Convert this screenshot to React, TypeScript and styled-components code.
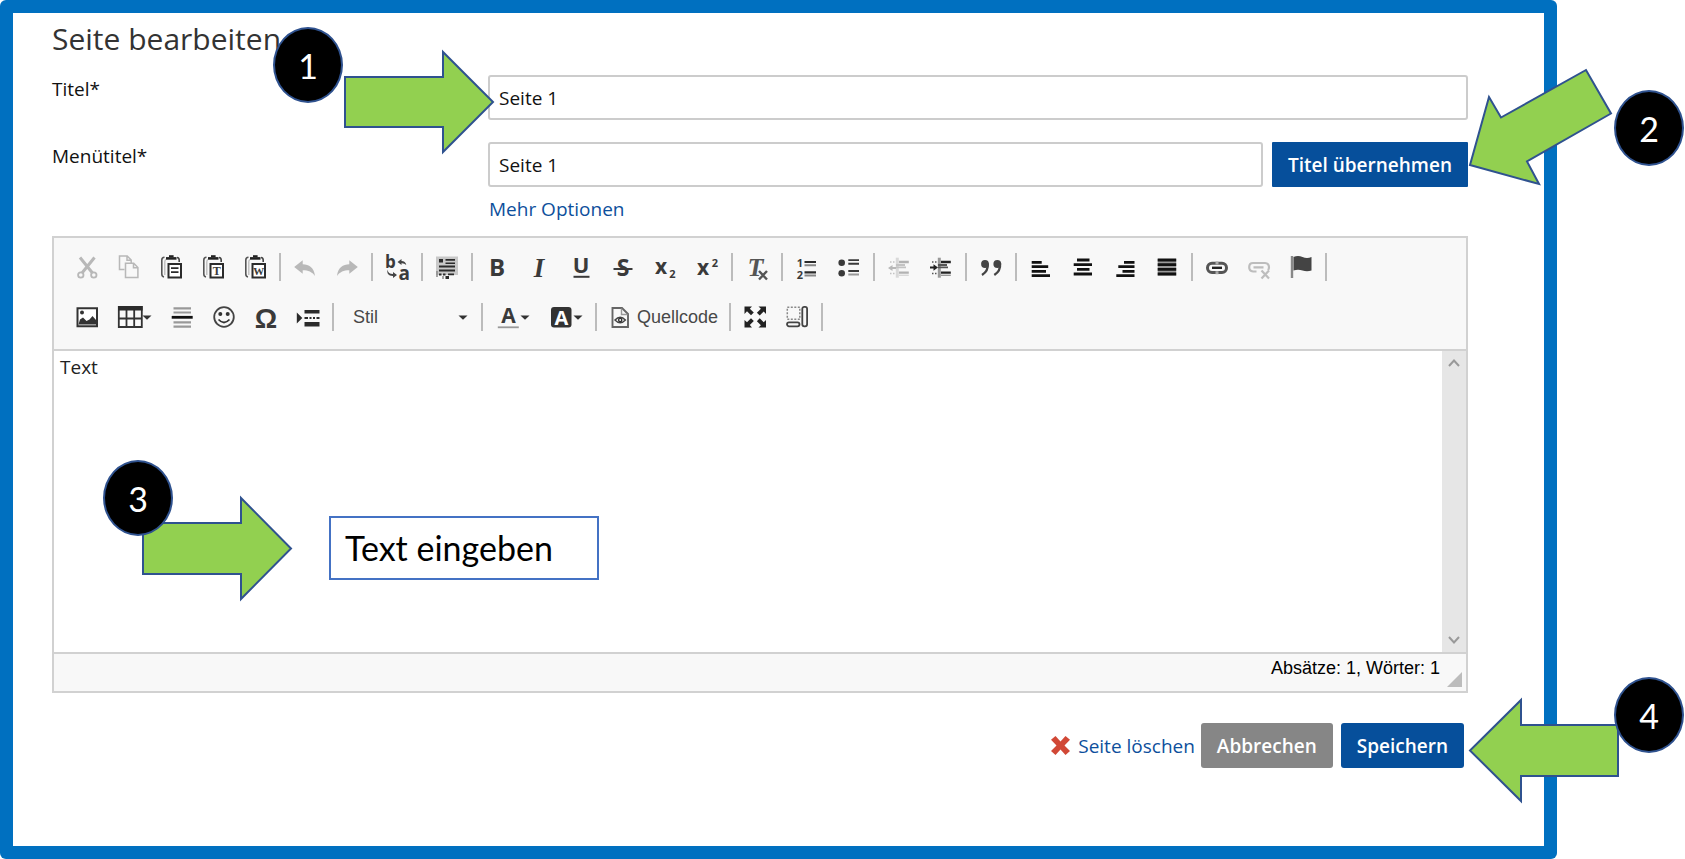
import React from 'react';
import styled, { createGlobalStyle } from 'styled-components';

const GlobalStyle = createGlobalStyle`
  *, *::before, *::after { box-sizing: border-box; }
  body {
    margin: 0;
    background: #fff;
    color: #111;
    font-family: "Open Sans", "Noto Sans", sans-serif;
    font-size: 19px;
  }
`;

const Stage = styled.div`
  position: relative;
  min-height: 100vh;
  display: flex;
  padding-right: 128px;
`;

const Frame = styled.main`
  flex: 1;
  min-width: 0;
  background: #0070c0;
  border-radius: 6px;
  padding: 13px;
  display: flex;
`;

const Page = styled.form`
  flex: 1;
  min-width: 0;
  background: #fff;
  padding: 4px 76px 0 39px;
`;

const Heading = styled.h1`
  margin: 0 0 14px;
  font-size: 30px;
  line-height: 44px;
  font-weight: 400;
  color: #333;
`;

const Fields = styled.div`
  display: flex;
  flex-direction: column;
  gap: 22px;
  margin-bottom: 15px;
`;

const FieldRow = styled.div`
  display: grid;
  grid-template-columns: 436px 1fr;
`;

const Label = styled.label`
  line-height: 28px;
`;

const FieldStack = styled.div`
  display: flex;
  flex-direction: column;
`;

const FieldLine = styled.div`
  display: flex;
  gap: 9px;
`;

const TextInput = styled.input`
  flex: 1;
  min-width: 0;
  height: 45px;
  border: 2px solid #ccc;
  border-radius: 3px;
  padding: 0 9px;
  background: #fff;
  color: #111;
  font: inherit;
`;

const ActionButton = styled.button<{ $tone?: 'grey'; $radius?: number }>`
  height: 45px;
  border: 0;
  border-radius: ${p => p.$radius ?? 3}px;
  padding: 0 16px;
  background: ${p => (p.$tone === 'grey' ? '#868686' : '#064f9b')};
  color: #fff;
  font: inherit;
  font-weight: 600;
`;

const TextLink = styled.a`
  display: inline-flex;
  align-items: center;
  gap: 8px;
  color: #0d4f9c;
  text-decoration: none;
  line-height: 24px;
`;

const MoreLink = styled(TextLink)`
  margin: 10px 0 0 1px;
`;

const Editor = styled.section`
  border: 2px solid #d1d1d1;
`;

const Toolbar = styled.div`
  background: #f8f8f8;
  border-bottom: 2px solid #d1d1d1;
  padding: 4px 12px 7px;
`;

const ToolRow = styled.div`
  display: flex;
  align-items: center;
  height: 50px;
`;

const ToolButton = styled.button<{ $width?: number; $faded?: boolean }>`
  width: ${p => p.$width ?? 42}px;
  height: 40px;
  flex: none;
  display: flex;
  align-items: center;
  justify-content: center;
  border: 0;
  padding: 0;
  background: none;
  color: #333;
  font: 18px "Liberation Sans", Arial, sans-serif;
  opacity: ${p => (p.$faded ? 0.32 : 1)};
`;

const SourceLabel = styled.span`
  margin-left: 5px;
  color: #484848;
`;

const Divider = styled.span`
  flex: none;
  width: 2px;
  height: 28px;
  margin: 0 3px;
  background: #bcbcbc;
`;

const StyleBox = styled.label`
  width: 141px;
  flex: none;
  display: flex;
  align-items: center;
  padding: 0 10px 0 16px;
`;

const StyleSelect = styled.select`
  flex: 1;
  min-width: 0;
  appearance: none;
  border: 0;
  padding: 0;
  background: none;
  color: #484848;
  font: 18px "Liberation Sans", Arial, sans-serif;
`;

const Icon = styled.svg`
  width: 24px;
  height: 24px;
  flex: none;
  overflow: visible;
`;

const CaretIcon = styled.svg`
  width: 10px;
  height: 5px;
  flex: none;
`;

const EditArea = styled.div`
  display: flex;
  height: 301px;
`;

const EditText = styled.textarea`
  flex: 1;
  min-width: 0;
  border: 0;
  resize: none;
  overflow: hidden;
  padding: 3px 6px;
  background: #fff;
  color: #222;
  font: inherit;
  line-height: 26px;
`;

const ScrollTrack = styled.div`
  width: 24px;
  background: #e6e6e6;
  display: flex;
  flex-direction: column;
  justify-content: space-between;
`;

const ScrollButton = styled.button`
  height: 24px;
  border: 0;
  padding: 0;
  background: none;
  display: grid;
  place-items: center;
`;

const StatusBar = styled.div`
  height: 39px;
  display: flex;
  justify-content: flex-end;
  gap: 7px;
  padding: 3px 4px 4px 0;
  background: #f8f8f8;
  border-top: 2px solid #d1d1d1;
  font: 18px/22px "Liberation Sans", Arial, sans-serif;
  color: #000;
`;

const Grip = styled.svg`
  width: 15px;
  height: 15px;
  align-self: flex-end;
`;

const Footer = styled.footer`
  display: flex;
  align-items: center;
  justify-content: flex-end;
  gap: 8px;
  padding: 30px 4px 0 0;
`;

const DeleteLink = styled(TextLink)`
  margin-right: -2px;
`;

/* Callouts float over the form. */
const Callout = styled.svg<{ $top: number; $left?: number; $right?: number }>`
  position: absolute;
  top: ${p => p.$top}px;
  left: ${p => (p.$left === undefined ? 'auto' : `${p.$left}px`)};
  right: ${p => (p.$right === undefined ? 'auto' : `${p.$right}px`)};
  overflow: visible;
  pointer-events: none;
  fill: #92d050;
  stroke: #2f528f;
  stroke-width: 2px;
`;

const Badge = styled.div<{ $top: number; $left?: number; $right?: number }>`
  position: absolute;
  top: ${p => p.$top}px;
  left: ${p => (p.$left === undefined ? 'auto' : `${p.$left}px`)};
  right: ${p => (p.$right === undefined ? 'auto' : `${p.$right}px`)};
  width: 70px;
  height: 76px;
  border: 2px solid #2f528f;
  border-radius: 50%;
  background: #000;
  color: #fff;
  display: grid;
  place-items: center;
  font: 34px Lato, Carlito, sans-serif;
`;

const Note = styled.div`
  position: absolute;
  top: 516px;
  left: 329px;
  width: 270px;
  height: 64px;
  border: 2px solid #4472c4;
  background: #fff;
  color: #000;
  padding-left: 14px;
  font: 34px/60px Lato, Carlito, sans-serif;
  white-space: nowrap;
`;

const Caret = () => (
  <CaretIcon viewBox="0 0 10 5"><path d="M0.5 0.5h9L5 4.7z" fill="#333" /></CaretIcon>
);

const SANS = '"Open Sans", sans-serif';
const SERIF = '"Liberation Serif", serif';

type GlyphProps = { x: number; y: number; size: number; children: string; italic?: boolean; family?: string; fill?: string; anchor?: 'start' | 'middle' };
const Glyph = ({ x, y, size, children, italic, family = SANS, fill = '#3a3a3a', anchor = 'middle' }: GlyphProps) => (
  <text x={x} y={y} fontSize={size} fontFamily={family} fontWeight={700} fontStyle={italic ? 'italic' : 'normal'} fill={fill} textAnchor={anchor}>
    {children}
  </text>
);

const clipboard = (
  <g fill="none">
    <path d="M5.5 2.2Q2.8 2.2 2.8 5v14q0 2.5 2.2 3" stroke="#555" strokeWidth="1.6" />
    <path d="M7 4.5Q5.8 5 5.8 7v13" stroke="#bbb" strokeWidth="1.3" />
    <path d="M7 3.4h10.5" stroke="#222" strokeWidth="2.6" />
    <path d="M10 1.2h4.6" stroke="#222" strokeWidth="2" />
    <path d="M18 2.5q2.2.3 2.2 2.5v2" stroke="#444" strokeWidth="1.6" />
  </g>
);
const sheet = <path d="M9.5 9h12.5v13.5H9.5z" fill="#fff" stroke="#2b2b2b" strokeWidth="2" />;

const indentBody = (
  <g fill="none">
    <path d="M10.3 2.7v20" stroke="#999" strokeWidth="3" />
    <path d="M12 7h9.8M12 17.6h9.8" stroke="#222" strokeWidth="2.4" />
    <path d="M9 12.3h10M9 10h9" stroke="#555" strokeWidth="1.8" />
    <path d="M12 20.3h9.8" stroke="#999" strokeWidth="1.4" />
    <path d="M3 7h6M3 18.5h6" stroke="#555" strokeWidth="1.6" strokeDasharray="1.5 1.5" />
  </g>
);

const icons: Record<string, React.ReactNode> = {
  cut: (
    <g fill="none" stroke="#333">
      <path d="M5 2.5l12.3 15.2M19.5 2.5L7.2 17.7" strokeWidth="3" />
      <circle cx="5.8" cy="20" r="2.7" strokeWidth="1.8" />
      <circle cx="18.8" cy="20" r="2.7" strokeWidth="1.8" />
    </g>
  ),
  copy: (
    <g fill="none" stroke="#333" strokeWidth="1.5">
      <path d="M7.5 14.5H2.5V1h7.7l4 4v3M10 1v4.3h4" />
      <path d="M8.5 8.2h8.2l4.2 4.3v10H8.5zM16.5 8.2v4.5h4.3" />
    </g>
  ),
  paste: <>{clipboard}{sheet}<path d="M12 13.2h7.5M12 17.2h7.5" stroke="#2b2b2b" strokeWidth="1.8" /></>,
  pasteText: <>{clipboard}{sheet}<Glyph x={15.8} y={20} size={12} family={SERIF}>T</Glyph></>,
  pasteWord: <>{clipboard}{sheet}<Glyph x={15.8} y={20} size={11} family={SERIF}>W</Glyph></>,
  undo: <path d="M1.2 12L9.7 5.3v4C16 9.3 21 12.5 22 21c-3-4-6.5-5.7-12.3-5.7v3.4z" fill="#333" />,
  redo: <path d="M22.8 12L14.3 5.3v4C8 9.3 3 12.5 2 21c3-4 6.5-5.7 12.3-5.7v3.4z" fill="#333" />,
  replace: (
    <>
      <Glyph x={0} y={13} size={17} anchor="start">b</Glyph>
      <Glyph x={13.5} y={25} size={19} anchor="start">a</Glyph>
      <path d="M12.5 7l4-3v2q4 0 4.8 4-2-2-4.8-1.8V10zM12 20l-4-3v2q-5 0-5.5-4.5-1.5 6.700 5.500 6.500v2z" fill="#444" />
    </>
  ),
  selectAll: (
    <g>
      <path d="M1 1.5h22v18.5H1z" fill="#c8c8c8" />
      <path d="M4 4h4v3.5H4zM10.5 4h9.5v1.8h-9.5zM10.5 7.5h9.5v1.6h-9.5zM4 10.5h16v2H4zM4 14.5h16v2H4zM4 18.5h2.5v2H4zM8 18.5h2.5v2H8zM13 18.5h6v1.8h-6zM10.5 21h3.5v3h-3.5z" fill="#2b2b2b" />
      <path d="M2 16v6M8 21v3" stroke="#888" strokeWidth="1.5" />
    </g>
  ),
  bold: <Glyph x={12} y={20.5} size={24}>B</Glyph>,
  italic: <Glyph x={12} y={22} size={27} italic family={SERIF}>I</Glyph>,
  underline: <><Glyph x={12} y={18} size={22}>U</Glyph><path d="M4.5 21.8h16" stroke="#3a3a3a" strokeWidth="2" /></>,
  strike: <><Glyph x={12} y={20.5} size={23}>S</Glyph><path d="M2.5 14h19" stroke="#3a3a3a" strokeWidth="2" /></>,
  sub: <><Glyph x={8} y={18.5} size={21}>x</Glyph><Glyph x={19.5} y={23} size={11}>2</Glyph></>,
  sup: <><Glyph x={8} y={20} size={21}>x</Glyph><Glyph x={20} y={11.5} size={11}>2</Glyph></>,
  clear: (
    <>
      <Glyph x={10.5} y={20.5} size={26} italic family={SERIF} fill="#555">T</Glyph>
      <path d="M14 16l8 8.5M22 16l-8 8.5" stroke="#555" strokeWidth="2.4" />
    </>
  ),
  ordered: (
    <g>
      <Glyph x={5} y={12} size={11}>1</Glyph>
      <Glyph x={5} y={24} size={11}>2</Glyph>
      <path d="M9.5 7h11.5M9.5 17.3h11.5" stroke="#2b2b2b" strokeWidth="2.2" />
      <path d="M9.5 10.3h11.5M9.5 20.6h11.5" stroke="#888" strokeWidth="2" />
    </g>
  ),
  bullets: (
    <g fill="#3a3a3a">
      <circle cx="4.7" cy="7.7" r="3.3" />
      <circle cx="4.7" cy="18.3" r="3.3" />
      <path d="M11.3 4.3H22v1.7H11.3zM11.3 7.8H22v2H11.3zM11.3 15H22v2H11.3z" />
      <path d="M11.3 18.5H22v2H11.3z" fill="#999" />
    </g>
  ),
  outdent: <>{indentBody}<path d="M1 13l4.5-3v2H9v2H5.5v2z" fill="#333" /></>,
  indent: <>{indentBody}<path d="M9 12.5l-4.5-3.2v2.2H1v2h3.5v2.2z" fill="#222" /></>,
  quote: (
    <g>
      <circle cx="6" cy="9" r="3.9" fill="#444" />
      <circle cx="18.3" cy="9" r="3.9" fill="#444" />
      <path d="M8.7 8.5Q9.5 16 3 20M21 8.5Q21.8 16 15.3 20" fill="none" stroke="#444" strokeWidth="2.4" />
    </g>
  ),
  left: <path d="M2.7 7.3h10M2.7 11.7h16.5M2.7 16.3H17M2.7 20.7H21" stroke="#111" strokeWidth="2.8" />,
  center: <path d="M6 5h12.5M2.7 9.7H21M6 14.3h12.5M2.7 19H21" stroke="#111" strokeWidth="2.8" />,
  right: <path d="M11 7.3h10.5M5.3 11.7h16.2M9.5 16.3h12M3.3 20.7h18.2" stroke="#111" strokeWidth="2.8" />,
  justify: (
    <>
      <path d="M2.7 4h18.5v16.5H2.7z" fill="#999" />
      <path d="M2.7 5h18.5M2.7 9.7h18.5M2.7 14.3h18.5M2.7 19h18.5" stroke="#111" strokeWidth="2.8" />
    </>
  ),
  link: (
    <g fill="none">
      <rect x="2.5" y="8.2" width="19" height="9.3" rx="4.5" stroke="#555" strokeWidth="3" />
      <path d="M10.5 8h3M10.5 17.7h3" stroke="#aaa" strokeWidth="3" />
      <path d="M7 12.8h10" stroke="#222" strokeWidth="2.4" />
    </g>
  ),
  unlink: (
    <g fill="none" stroke="#444">
      <path d="M9.5 16.5H6q-3.8-.3-3.8-4.2Q2.2 8 6 8h12q4 .3 4 4.3 0 2-1 3M6.5 12.3h10" strokeWidth="2.2" />
      <path d="M14.5 15.5l7.5 8M22 15.5l-7.5 8" strokeWidth="2.2" />
    </g>
  ),
  anchor: (
    <g>
      <path d="M3 1v22" stroke="#888" strokeWidth="2.4" />
      <path d="M4.5 2q4.5-2 9 0t9 0v13.5q-4.5 1.5-9 0t-9 0z" fill="#444" />
    </g>
  ),
  image: (
    <g>
      <path d="M2.5 3.3h19.5v18H2.5z" fill="#fff" stroke="#333" strokeWidth="2" />
      <path d="M3.5 19.5l1.5-5 3-2 3.5 3.5 3-1.5 3-3.5 3.5 4v4.5z" fill="#333" />
      <circle cx="7" cy="7.5" r="2" fill="#333" />
    </g>
  ),
  table: (
    <g>
      <path d="M.8 2h23v20H.8zM8.5 5v17M16.2 5v17M.8 13.5h23" fill="none" stroke="#333" strokeWidth="1.8" />
      <path d="M0 1h24.6v4.5H0z" fill="#2b2b2b" />
    </g>
  ),
  rule: (
    <g>
      <path d="M3.5 3.3h17.5M3.5 7.5h17.5M3.5 17.3h17.5M3.5 21.6h17.5" stroke="#999" strokeWidth="2.2" />
      <path d="M1.7 12.3h21" stroke="#111" strokeWidth="2.8" />
    </g>
  ),
  smiley: (
    <g>
      <circle cx="12" cy="12" r="9.8" fill="none" stroke="#444" strokeWidth="1.8" />
      <circle cx="8.3" cy="9" r="2" fill="#333" />
      <circle cx="15.7" cy="9" r="2" fill="#333" />
      <path d="M6.5 14.5Q12 20.5 17.5 14.5" fill="none" stroke="#333" strokeWidth="1.8" />
    </g>
  ),
  omega: <Glyph x={12} y={22.5} size={28} family={'"Liberation Sans", sans-serif'}>Ω</Glyph>,
  pageBreak: (
    <g fill="#2b2b2b">
      <path d="M.8 7.5l5.5 5.5-5.5 5.5z" />
      <path d="M8.5 5h15v3.5h-15zM8.5 17h15v4.5h-15zM8.5 12h3.5v2H8.5zM13.5 12h2v2h-2zM17 12h2v2h-2zM20.5 12h3v2h-3z" />
    </g>
  ),
  textColor: <><Glyph x={12.5} y={18} size={21}>A</Glyph><path d="M1.8 22.3h21" stroke="#999" strokeWidth="1.8" /></>,
  bgColor: <><rect x="2" y="2" width="20.5" height="20.5" rx="3" fill="#333" /><Glyph x={12.3} y={19.5} size={20} fill="#fff">A</Glyph></>,
  source: (
    <g fill="none">
      <path d="M4.5 3h9.5l6 6v13h-15.5z" stroke="#666" strokeWidth="1.9" />
      <path d="M13.5 3.5v6h6" stroke="#999" strokeWidth="1.4" />
      <path d="M7 15Q12.2 9.500 17.400 15Q12.200 20.500 7 15z" stroke="#444" strokeWidth="1.500" />
      <circle cx="12.2" cy="15" r="1.6" stroke="#333" strokeWidth="1.4" />
    </g>
  ),
  maximize: (
    <path
      d="M1.5 1.5h7.500L6.800 3.700l4 3.800-2.800 2.800-4-4L1.500 9zM23 1.500v7.500l-2.300-2.500-4 4-2.800-2.800 4-4-2.400-2.200zM1.500 22.500V15L4 17.300l4-4 2.800 2.800-4 4L9 22.500zM23 22.500h-7.500l2.400-2.300-4-4 2.800-2.900 4 4L23 15z"
      fill="#222"
    />
  ),
  blocks: (
    <g fill="none">
      <path d="M2.3 2.3h12.5v12H2.3z" stroke="#888" strokeWidth="1.5" strokeDasharray="2 1.5" />
      <rect x="17.3" y="1.8" width="4.8" height="19.5" rx="2" stroke="#444" strokeWidth="1.8" />
      <rect x="2" y="17.3" width="12.5" height="4" rx="2" stroke="#444" strokeWidth="1.8" />
    </g>
  ),
};

type Tool = { icon: string; label: string; faded?: boolean; menu?: boolean };

const firstRow: Tool[][] = [
  [
    { icon: 'cut', label: 'Ausschneiden', faded: true },
    { icon: 'copy', label: 'Kopieren', faded: true },
    { icon: 'paste', label: 'Einfügen' },
    { icon: 'pasteText', label: 'Als Klartext einfügen' },
    { icon: 'pasteWord', label: 'Aus Word einfügen' },
  ],
  [{ icon: 'undo', label: 'Rückgängig', faded: true }, { icon: 'redo', label: 'Wiederherstellen', faded: true }],
  [{ icon: 'replace', label: 'Ersetzen' }],
  [{ icon: 'selectAll', label: 'Alles auswählen' }],
  [
    { icon: 'bold', label: 'Fett' },
    { icon: 'italic', label: 'Kursiv' },
    { icon: 'underline', label: 'Unterstrichen' },
    { icon: 'strike', label: 'Durchgestrichen' },
    { icon: 'sub', label: 'Tiefgestellt' },
    { icon: 'sup', label: 'Hochgestellt' },
  ],
  [{ icon: 'clear', label: 'Formatierung entfernen' }],
  [{ icon: 'ordered', label: 'Nummerierte Liste' }, { icon: 'bullets', label: 'Liste' }],
  [{ icon: 'outdent', label: 'Einzug verkleinern', faded: true }, { icon: 'indent', label: 'Einzug erhöhen' }],
  [{ icon: 'quote', label: 'Zitatblock' }],
  [
    { icon: 'left', label: 'Linksbündig' },
    { icon: 'center', label: 'Zentriert' },
    { icon: 'right', label: 'Rechtsbündig' },
    { icon: 'justify', label: 'Blocksatz' },
  ],
  [
    { icon: 'link', label: 'Link einfügen' },
    { icon: 'unlink', label: 'Link entfernen', faded: true },
    { icon: 'anchor', label: 'Anker einfügen' },
  ],
];

const insertTools: Tool[] = [
  { icon: 'image', label: 'Bild' },
  { icon: 'table', label: 'Tabelle', menu: true },
  { icon: 'rule', label: 'Horizontale Linie' },
  { icon: 'smiley', label: 'Smiley' },
  { icon: 'omega', label: 'Sonderzeichen' },
  { icon: 'pageBreak', label: 'Seitenumbruch' },
];
const colorTools: Tool[] = [
  { icon: 'textColor', label: 'Textfarbe', menu: true },
  { icon: 'bgColor', label: 'Hintergrundfarbe', menu: true },
];
const viewTools: Tool[] = [
  { icon: 'maximize', label: 'Maximieren' },
  { icon: 'blocks', label: 'Blöcke anzeigen' },
];

const ToolGroup = ({ tools }: { tools: Tool[] }) => (
  <>
    {tools.map(t => (
      <ToolButton key={t.icon} type="button" aria-label={t.label} $faded={t.faded} $width={t.menu ? 53 : 42}>
        <Icon viewBox="0 0 24 24">{icons[t.icon]}</Icon>
        {t.menu && <Caret />}
      </ToolButton>
    ))}
    <Divider />
  </>
);

export default function App() {
  return (
    <>
      <GlobalStyle />
      <Stage>
        <Frame>
          <Page onSubmit={e => e.preventDefault()}>
            <Heading>Seite bearbeiten</Heading>
            <Fields>
              <FieldRow>
                <Label htmlFor="title">Titel*</Label>
                <FieldLine>
                  <TextInput id="title" type="text" defaultValue="Seite 1" />
                </FieldLine>
              </FieldRow>
              <FieldRow>
                <Label htmlFor="menu-title">Menütitel*</Label>
                <FieldStack>
                  <FieldLine>
                    <TextInput id="menu-title" type="text" defaultValue="Seite 1" />
                    <ActionButton type="button" $radius={1}>Titel übernehmen</ActionButton>
                  </FieldLine>
                  <MoreLink href="#optionen">Mehr Optionen</MoreLink>
                </FieldStack>
              </FieldRow>
            </Fields>

            <Editor aria-label="Texteditor">
              <Toolbar role="toolbar">
                <ToolRow>
                  {firstRow.map(group => <ToolGroup key={group[0].icon} tools={group} />)}
                </ToolRow>
                <ToolRow>
                  <ToolGroup tools={insertTools} />
                  <StyleBox>
                    <StyleSelect aria-label="Stil" defaultValue="Stil">
                      <option>Stil</option>
                    </StyleSelect>
                    <Caret />
                  </StyleBox>
                  <Divider />
                  <ToolGroup tools={colorTools} />
                  <ToolButton type="button" $width={126}>
                    <Icon viewBox="0 0 24 24">{icons.source}</Icon>
                    <SourceLabel>Quellcode</SourceLabel>
                  </ToolButton>
                  <Divider />
                  <ToolGroup tools={viewTools} />
                </ToolRow>
              </Toolbar>
              <EditArea>
                <EditText aria-label="Inhalt" defaultValue="Text" />
                <ScrollTrack>
                  <ScrollButton type="button" aria-label="Nach oben">
                    <svg width="12" height="8" viewBox="0 0 12 8"><path d="M1 7l5-5.500L11 7" fill="none" stroke="#999" strokeWidth="2" /></svg>
                  </ScrollButton>
                  <ScrollButton type="button" aria-label="Nach unten">
                    <svg width="12" height="8" viewBox="0 0 12 8"><path d="M1 1l5 5.500L11 1" fill="none" stroke="#999" strokeWidth="2" /></svg>
                  </ScrollButton>
                </ScrollTrack>
              </EditArea>
              <StatusBar>
                <span>Absätze: 1, Wörter: 1</span>
                <Grip viewBox="0 0 15 15"><path d="M15 0v15H0z" fill="#bcbcbc" /></Grip>
              </StatusBar>
            </Editor>

            <Footer>
              <DeleteLink href="#loeschen">
                <svg width="19" height="19" viewBox="0 0 19 19">
                  <path d="M4.500 0L9.500 5.500 14.500 0 19 3.800 13.500 9.500 19 15 14.500 19 9.500 13.500 4.500 19 0 15 5.500 9.500 0 3.800z" fill="#d14836" />
                </svg>
                Seite löschen
              </DeleteLink>
              <ActionButton type="button" $tone="grey">Abbrechen</ActionButton>
              <ActionButton type="submit">Speichern</ActionButton>
            </Footer>
          </Page>
        </Frame>

        <Callout $top={51} $left={344} width="149" height="102"><path d="M1 26h98V1l50 50-50 50V76H1z" /></Callout>
        <Callout $top={69} $right={73} width="142" height="116"><path d="M0 96L19 28l12 20.500L116 1l25 43.500-84 48L69 115z" /></Callout>
        <Callout $top={497} $left={142} width="150" height="103"><path d="M1 26h98V1l50 50.500L99 102V77H1z" /></Callout>
        <Callout $top={699} $right={66} width="150" height="104"><path d="M149 26H52V1L1 51.500 52 102V77h97z" /></Callout>
        <Badge $top={27} $left={273}>1</Badge>
        <Badge $top={90} $right={1}>2</Badge>
        <Badge $top={460} $left={103}>3</Badge>
        <Badge $top={677} $right={1}>4</Badge>
        <Note>Text eingeben</Note>
      </Stage>
    </>
  );
}
